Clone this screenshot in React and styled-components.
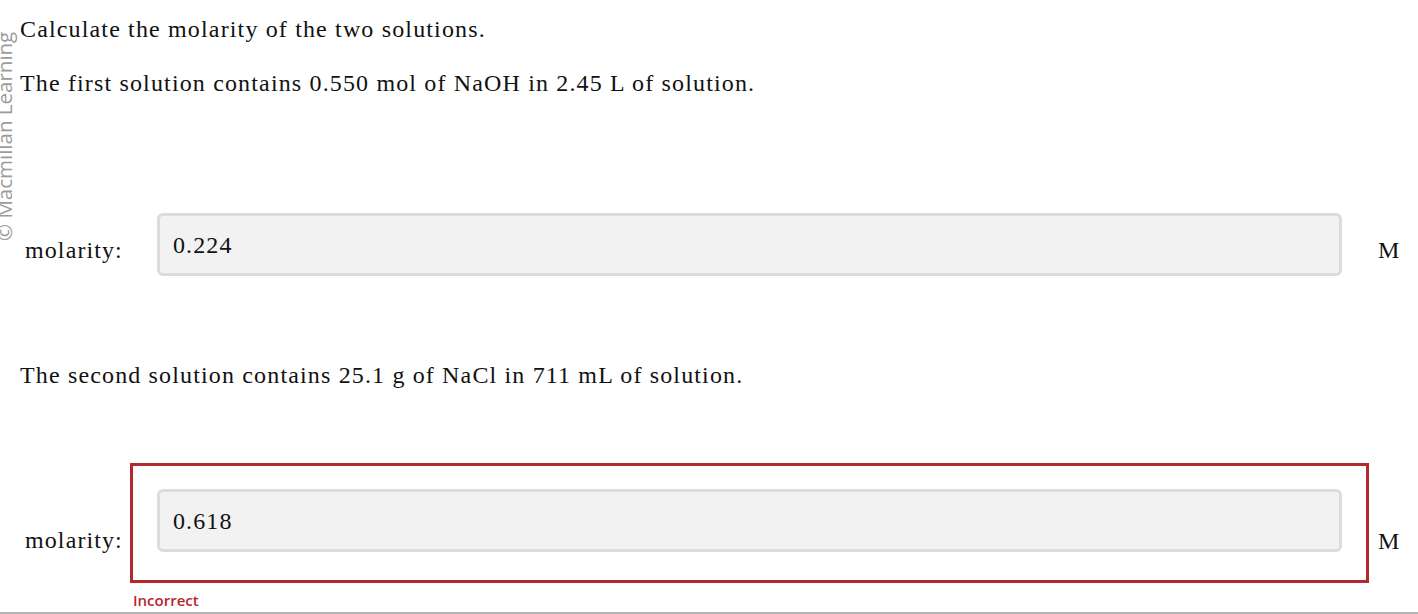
import React from "react";
import styled, { createGlobalStyle } from "styled-components";

const GlobalStyle = createGlobalStyle`
  html, body {
    margin: 0;
    padding: 0;
    background: #ffffff;
  }
  body {
    font-family: "Liberation Serif", "Times New Roman", serif;
    color: #111;
  }
`;

const Page = styled.div`
  position: relative;
  height: 614px;
  box-sizing: border-box;
  padding-left: 20px;
  overflow: hidden;
  border-bottom: 2px solid #b5b5b5;
`;

const Watermark = styled.div`
  position: absolute;
  left: -6px;
  top: 241px;
  transform-origin: 0 0;
  transform: rotate(-90deg);
  font-family: "Open Sans", "Liberation Sans", sans-serif;
  font-size: 20.5px;
  line-height: 20px;
  color: #9c9c9c;
  white-space: nowrap;
`;

const Para = styled.p`
  margin: ${(p) => p.$top}px 0 0 0;
  font-size: 24px;
  line-height: 28px;
  letter-spacing: 1.15px;
`;

const AnswerRow = styled.div`
  display: flex;
  align-items: center;
  margin-top: ${(p) => p.$top}px;
`;

const Label = styled.div`
  width: 105px;
  padding-left: 5px;
  padding-top: ${(p) => p.$drop}px;
  font-size: 24px;
  letter-spacing: 1.1px;
  line-height: 28px;
`;

const AnswerBox = styled.div`
  flex: 0 0 1239px;
  box-sizing: border-box;
  padding: 23px 24px 28px 24px;
  border: 3px solid ${(p) => (p.$error ? "#b3282d" : "transparent")};
`;

const Input = styled.div`
  box-sizing: border-box;
  height: 63px;
  padding: 15px 13px 10px;
  background: #f2f2f2;
  border: 3px solid #dcdcdc;
  border-radius: 6px;
  font-size: 24px;
  letter-spacing: 1.1px;
  line-height: 28px;
`;

const Unit = styled.div`
  padding-left: 9px;
  padding-top: ${(p) => p.$drop}px;
  font-size: 24px;
  line-height: 28px;
`;

const Feedback = styled.div`
  margin: 7px 0 0 113px;
  font-family: "Open Sans", "Liberation Sans", sans-serif;
  font-size: 15px;
  font-weight: 600;
  line-height: 20px;
  color: #b3282d;
`;

export default function App() {
  return (
    <>
      <GlobalStyle />
      <Page>
        <Watermark>© Macmillan Learning</Watermark>
        <Para $top={15}>Calculate the molarity of the two solutions.</Para>
        <Para $top={26}>
          The first solution contains 0.550 mol of NaOH in 2.45 L of solution.
        </Para>
        <AnswerRow $top={90}>
          <Label $drop={6}>molarity:</Label>
          <AnswerBox>
            <Input>0.224</Input>
          </AnswerBox>
          <Unit $drop={6}>M</Unit>
        </AnswerRow>
        <Para $top={54}>
          The second solution contains 25.1 g of NaCl in 711 mL of solution.
        </Para>
        <AnswerRow $top={74}>
          <Label $drop={33}>molarity:</Label>
          <AnswerBox $error>
            <Input>0.618</Input>
          </AnswerBox>
          <Unit $drop={35}>M</Unit>
        </AnswerRow>
        <Feedback>Incorrect</Feedback>
      </Page>
    </>
  );
}
